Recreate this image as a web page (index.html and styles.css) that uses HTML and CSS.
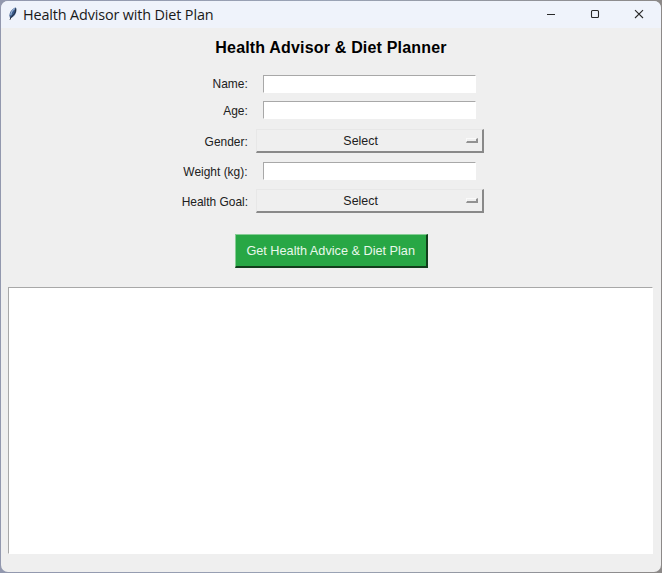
FILE: index.html
```html
<!DOCTYPE html>
<html lang="en">
<head>
<meta charset="utf-8">
<title>Health Advisor with Diet Plan</title>
<link rel="stylesheet" href="styles.css">
</head>
<body>
<div class="window">
  <header class="titlebar">
    <svg class="feather" width="10" height="14" viewBox="0 0 10 14">
      <path d="M7.8 .5C5 1.2 1.6 4.2 1.4 8.6L2.1 11.4 4.8 10C8 7.4 9.2 3.8 7.8.5Z" fill="#38598b"/>
      <path d="M7 1.5C4.6 3 2.9 5.4 2.8 8.2" fill="none" stroke="#9bb5d8" stroke-width="1.2"/>
      <path d="M7.8 1.5C7.9 5 6 8 3 10.2L2 12.8" fill="none" stroke="#24282f" stroke-width=".9"/>
    </svg>
    <span class="caption">Health Advisor with Diet Plan</span>
    <div class="controls">
      <svg width="10" height="10" viewBox="0 0 10 10"><path d="M1 5.5H9"/></svg>
      <svg width="10" height="10" viewBox="0 0 10 10"><rect x="1.5" y="1.5" width="7" height="7" rx="1"/></svg>
      <svg width="10" height="10" viewBox="0 0 10 10"><path d="M1 1.2 9 9M9 1.2 1 9"/></svg>
    </div>
  </header>
  <main>
    <h1>Health Advisor &amp; Diet Planner</h1>
    <form class="form">
      <label>Name:</label><div class="entry"></div>
      <label>Age:</label><div class="entry"></div>
      <label>Gender:</label><div class="menu"><span>Select</span><i></i></div>
      <label>Weight (kg):</label><div class="entry"></div>
      <label>Health Goal:</label><div class="menu"><span>Select</span><i></i></div>
    </form>
    <button class="submit" type="button"><span>Get Health Advice &amp; Diet Plan</span></button>
    <div class="output"></div>
  </main>
</div>
</body>
</html>
```

FILE: styles.css
```css
* { box-sizing: border-box; }
body {
  margin: 0;
  height: 573px;
  padding: 1px;
  overflow: hidden;
  background: linear-gradient(90deg, #9298ae, #9aa3b5 50%, #8c8988);
  font-family: "Liberation Sans", Arial, sans-serif;
  color: #202020;
}
.window {
  height: 571px;
  border-radius: 7px;
  overflow: hidden;
  background: #efefef;
}
.titlebar {
  height: 27px;
  display: flex;
  align-items: center;
  padding: 0 17px 0 7px;
  background: #eff3fb;
}
.feather { margin-bottom: 2px; }
.caption {
  margin-left: 5px;
  padding-top: 1px;
  font: 14.4px/20px "Open Sans", "Noto Sans", sans-serif;
  letter-spacing: -0.14px;
  white-space: nowrap;
  color: #191919;
}
.controls {
  display: flex;
  gap: 34px;
  margin-left: auto;
  margin-bottom: 2px;
}
.controls svg { fill: none; stroke: #292929; stroke-width: 1.1; }
main {
  display: flex;
  flex-direction: column;
  align-items: center;
}
h1 {
  margin: 10px 0 0;
  font-size: 16px;
  line-height: 20px;
  letter-spacing: 0.18px;
  color: #000;
  white-space: nowrap;
}
.form {
  display: grid;
  grid-template-columns: 100px 228px;
  grid-template-rows: 27px 26px 36px 24px 36px;
  column-gap: 8px;
  align-items: center;
  margin-top: 12px;
  margin-right: 30px;
}
label, .menu {
  font-size: 13.5px;
  line-height: 16px;
  white-space: nowrap;
}
label {
  justify-self: end;
  padding-top: 1px;
  transform: scaleX(0.885);
  transform-origin: right;
}
.entry {
  width: 213px;
  height: 18px;
  margin-left: 7px;
  background: #fff;
  border: 1px solid #fff;
  border-top-color: #a8a8a8;
  border-left-color: #a8a8a8;
}
.menu {
  height: 24px;
  display: flex;
  align-items: center;
  padding: 0 4px 0 1px;
  border: 1px solid #e7e7e7;
  border-right: 2px solid #898989;
  border-bottom: 2px solid #898989;
}
.menu span {
  flex: 1;
  padding: 1px 3px 0 0;
  text-align: center;
  transform: scaleX(0.92);
}
.menu i {
  width: 12px;
  height: 5px;
  border: 1px solid #fafafa;
  border-right: 2px solid #929292;
  border-bottom: 2px solid #929292;
}
.submit {
  width: 193px;
  height: 34px;
  margin-top: 15px;
  padding: 0;
  border: 1px solid #86cd95;
  border-right: 2px solid #123d1c;
  border-bottom: 2px solid #123d1c;
  background: #28a745;
  color: #e9f8eb;
  font: 13.5px/16px "Liberation Sans", Arial, sans-serif;
  white-space: nowrap;
}
.submit span {
  display: inline-block;
  transform: scaleX(0.94);
}
.output {
  width: 645px;
  height: 267px;
  margin-top: 19px;
  margin-right: 1px;
  background: #fff;
  border: 1px solid #fff;
  border-top-color: #a8a8a8;
  border-left-color: #a8a8a8;
}
```
